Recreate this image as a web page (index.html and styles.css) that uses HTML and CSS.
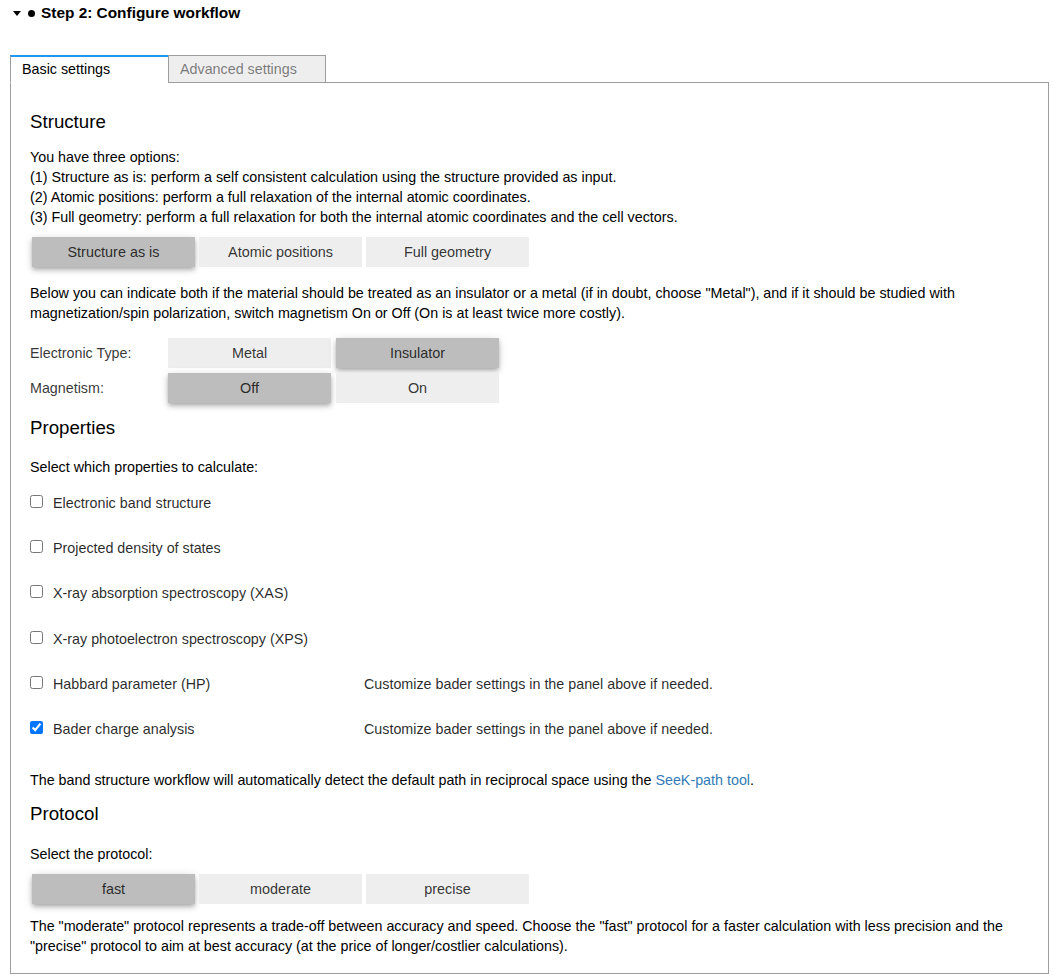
FILE: index.html
```html
<!DOCTYPE html>
<html lang="en">
<head>
  <meta charset="UTF-8">
  <title>Configure workflow</title>
  <link rel="stylesheet" href="styles.css">
</head>
<body>
  <div class="step-head">
    <span class="caret"></span>
    <span class="dot"></span>
    <span>Step 2: Configure workflow</span>
  </div>

  <div class="tabbar">
    <div class="tab tab-active">Basic settings</div>
    <div class="tab">Advanced settings</div>
  </div>

  <div class="panel">
    <!-- Structure -->
    <h3 class="section-title title-structure">Structure</h3>
    <p class="text options">
      You have three options:<br>
      (1) Structure as is: perform a self consistent calculation using the structure provided as input.<br>
      (2) Atomic positions: perform a full relaxation of the internal atomic coordinates.<br>
      (3) Full geometry: perform a full relaxation for both the internal atomic coordinates and the cell vectors.
    </p>
    <div class="toggle-group">
      <button class="toggle is-on">Structure as is</button>
      <button class="toggle">Atomic positions</button>
      <button class="toggle">Full geometry</button>
    </div>
    <p class="text hint">
      Below you can indicate both if the material should be treated as an insulator or a metal (if in doubt, choose "Metal"), and if it should be studied with magnetization/spin polarization, switch magnetism On or Off (On is at least twice more costly).
    </p>
    <div class="choice-row row-type">
      <span class="choice-label">Electronic Type:</span>
      <div class="toggle-group">
        <button class="toggle">Metal</button>
        <button class="toggle is-on">Insulator</button>
      </div>
    </div>
    <div class="choice-row row-magnet">
      <span class="choice-label">Magnetism:</span>
      <div class="toggle-group">
        <button class="toggle is-on">Off</button>
        <button class="toggle">On</button>
      </div>
    </div>

    <!-- Properties -->
    <h3 class="section-title title-properties">Properties</h3>
    <p class="text select-props">Select which properties to calculate:</p>
    <div class="check-list">
      <label class="check-row"><input type="checkbox"><span class="check-name">Electronic band structure</span></label>
      <label class="check-row"><input type="checkbox"><span class="check-name">Projected density of states</span></label>
      <label class="check-row"><input type="checkbox"><span class="check-name">X-ray absorption spectroscopy (XAS)</span></label>
      <label class="check-row"><input type="checkbox"><span class="check-name">X-ray photoelectron spectroscopy (XPS)</span></label>
      <label class="check-row"><input type="checkbox"><span class="check-name">Habbard parameter (HP)</span><span class="check-note">Customize bader settings in the panel above if needed.</span></label>
      <label class="check-row"><input type="checkbox" checked><span class="check-name">Bader charge analysis</span><span class="check-note">Customize bader settings in the panel above if needed.</span></label>
    </div>
    <p class="text band-note">The band structure workflow will automatically detect the default path in reciprocal space using the <a href="#">SeeK-path tool</a>.</p>

    <!-- Protocol -->
    <h3 class="section-title title-protocol">Protocol</h3>
    <p class="text select-protocol">Select the protocol:</p>
    <div class="toggle-group">
      <button class="toggle is-on">fast</button>
      <button class="toggle">moderate</button>
      <button class="toggle">precise</button>
    </div>
    <p class="text protocol-note">The "moderate" protocol represents a trade-off between accuracy and speed. Choose the "fast" protocol for a faster calculation with less precision and the "precise" protocol to aim at best accuracy (at the price of longer/costlier calculations).</p>
  </div>
</body>
</html>
```

FILE: styles.css
```css
/* Page base */
body {
  margin: 0;
  font-family: "Liberation Sans", Arial, sans-serif;
  font-size: 14.3px;
  line-height: 20px;
  color: #000;
}

/* Collapsible step header */
.step-head {
  display: flex;
  align-items: center;
  padding: 3px 0 0 13px;
  font-size: 15.4px;
  font-weight: bold;
  line-height: 20px;
}

.caret {
  width: 0;
  height: 0;
  border-left: 4.5px solid transparent;
  border-right: 4.5px solid transparent;
  border-top: 5px solid #000;
  margin-right: 7px;
}

.dot {
  width: 7px;
  height: 7px;
  border-radius: 50%;
  background: #000;
  margin-right: 6px;
}

/* Tabs */
.tabbar {
  display: flex;
  margin: 32px 0 -1px 10px;
  position: relative;
  z-index: 1;
}

.tab {
  box-sizing: border-box;
  width: 158px;
  height: 28px;
  border: 1px solid #9e9e9e;
  background: #eeeeee;
  color: rgba(0, 0, 0, 0.5);
  padding-left: 11px;
  line-height: 26px;
}

.tab + .tab {
  margin-left: -1px;
}

.tab-active {
  width: 159px;
  background: #fff;
  color: #000;
  border-top: 2px solid #2196f3;
  border-bottom-color: #fff;
  line-height: 25px;
}

/* Tab content */
.panel {
  margin: 0 4px 0 10px;
  border: 1px solid #9e9e9e;
  padding: 0 19px 17px;
}

.section-title {
  margin: 0;
  font-size: 18.7px;
  font-weight: normal;
  line-height: 22px;
}

.title-structure { margin-top: 28px; }
.title-properties { margin-top: 14px; }
.title-protocol { margin-top: 13px; }

.text {
  margin: 0;
}

.options { margin-top: 14px; }
.hint { margin-top: 16px; }
.select-props { margin-top: 18px; }
.band-note { margin-top: 31px; }
.select-protocol { margin-top: 19px; }
.protocol-note { margin-top: 12px; }

.text a {
  color: #337ab7;
  text-decoration: none;
}

/* Toggle buttons */
.toggle-group {
  display: flex;
  gap: 4px;
  margin-top: 10px;
  padding-left: 2px;
}

.toggle {
  width: 163px;
  height: 30px;
  padding: 0;
  border: 0;
  background: #eeeeee;
  color: rgba(0, 0, 0, 0.8);
  font-family: inherit;
  font-size: 14.4px;
}

.toggle.is-on {
  background: #bdbdbd;
  box-shadow: 0 2px 4px -1px rgba(0, 0, 0, 0.2), 0 4px 5px 0 rgba(0, 0, 0, 0.14), 0 1px 10px 0 rgba(0, 0, 0, 0.12);
}

.choice-row {
  display: flex;
  align-items: center;
}

.row-type { margin-top: 15px; }
.row-magnet { margin-top: 5px; }

.choice-label {
  width: 138px;
  color: rgba(0, 0, 0, 0.8);
}

.choice-row .toggle-group {
  margin-top: 0;
  padding-left: 0;
  gap: 5px;
}

/* Property checkboxes */
.check-list {
  margin-top: 16px;
}

.check-row {
  display: flex;
  align-items: center;
  height: 20px;
  color: rgba(0, 0, 0, 0.85);
}

.check-row + .check-row {
  margin-top: 25.2px;
}

.check-row input {
  width: 13px;
  height: 13px;
  margin: -3px 10px 0 0;
}

.check-name {
  width: 311px;
}
```
